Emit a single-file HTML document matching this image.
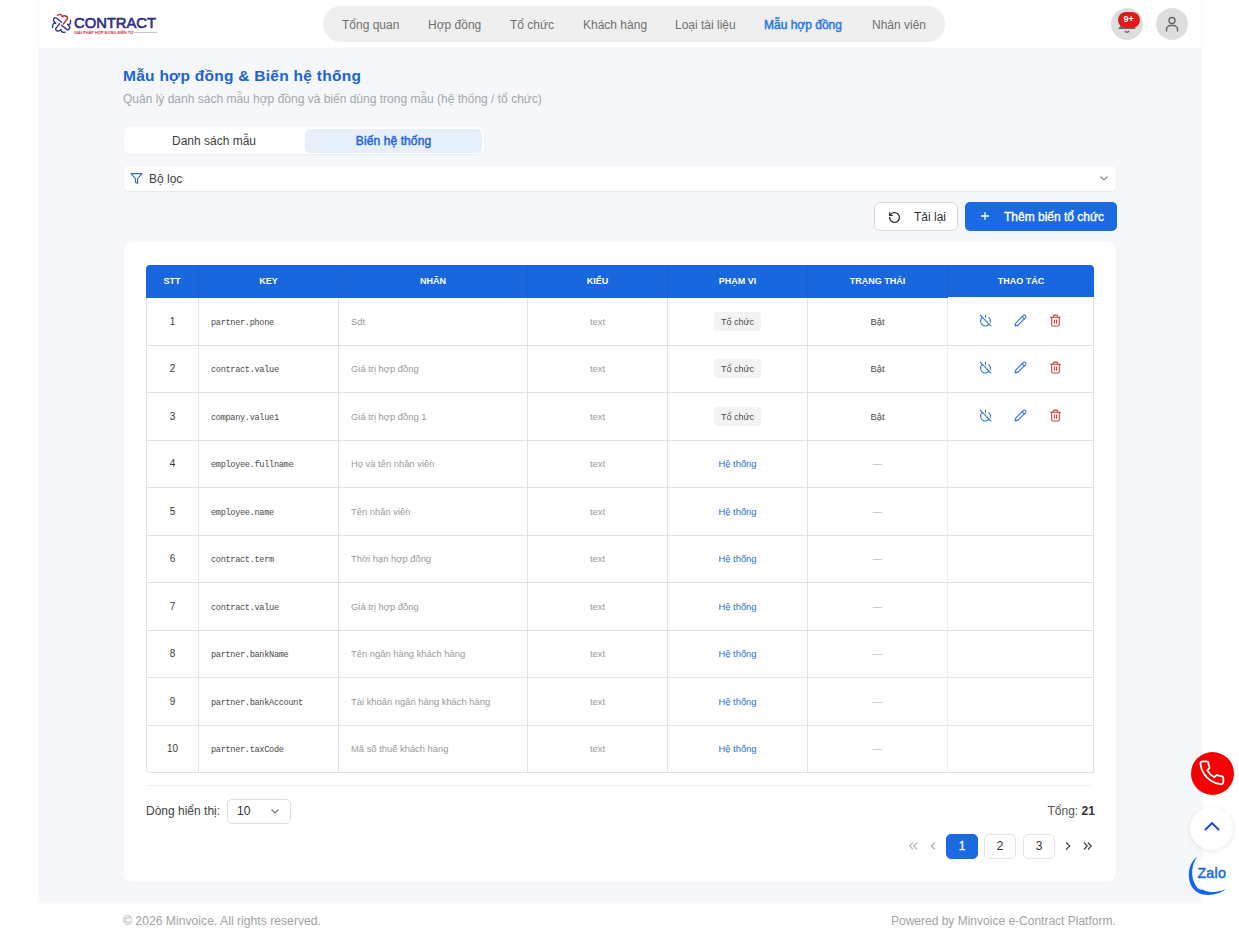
<!DOCTYPE html>
<html><head><meta charset="utf-8">
<style>
*{box-sizing:border-box;margin:0;padding:0}
html,body{width:1239px;height:937px;overflow:hidden;background:#fff;font-family:"Liberation Sans",sans-serif;color:#333}
.abs{position:absolute}
.main{position:absolute;left:39px;top:48px;width:1162px;height:854px;background:#f5f7fb;box-shadow:0 0 2px rgba(0,0,0,.04)}
.shell{position:absolute;left:39px;top:0;width:1162px;height:903px;box-shadow:0 0 3px rgba(0,0,0,.06)}
.nav{position:absolute;left:323px;top:6px;width:622px;height:36px;border-radius:18px;background:#efefef}
.nav span{position:absolute;top:1px;line-height:36px;font-size:12px;color:#6f6f6f;white-space:nowrap}
.nav span.act{color:#2a7be5;-webkit-text-stroke:0.5px #2a7be5}
.circ{position:absolute;top:8px;width:32px;height:32px;border-radius:50%;background:#dedede}
.title{position:absolute;left:123px;top:65.5px;font-size:15.5px;line-height:20px;font-weight:700;color:#1b64d4;white-space:nowrap;letter-spacing:0.27px}
.sub{position:absolute;left:123px;top:91px;font-size:12px;line-height:16px;color:#a3a7ad;white-space:nowrap}
.tabs{position:absolute;left:124px;top:127px;width:360px;height:27px;background:#fff;border-radius:6px;box-shadow:0 1px 2px rgba(0,0,0,.05)}
.tab{position:absolute;top:2px;height:24px;line-height:24px;font-size:12px;text-align:center;white-space:nowrap}
.filter{position:absolute;left:124px;top:166px;width:992px;height:25px;background:#fff;border-radius:4px;box-shadow:0 0 0 .5px rgba(0,0,0,.03),0 1px 2px rgba(0,0,0,.06)}
.btn{position:absolute;top:202px;height:29px;border-radius:6px;font-size:12px;line-height:27px;white-space:nowrap}
.card{position:absolute;left:124px;top:242px;width:992px;height:640px;background:#fff;border-radius:8px;box-shadow:0 1px 2px rgba(0,0,0,.04)}
table{position:absolute;left:146px;top:265px;width:948px;border-collapse:separate;border-spacing:0;table-layout:fixed}
th{background:#1967de;color:#fff;font-size:9px;font-weight:700;height:33px;text-align:center;padding:0 0 2px;border-right:1px solid #1a60d0}
th:first-child{border-top-left-radius:4px}
th:last-child{border-top-right-radius:4px;border-right:none;background:linear-gradient(#1967de 32px,#fff 32px)}
td{height:47.5px;font-size:9.4px;padding:0;border-right:1px solid #e3e3e3;border-bottom:1px solid #e3e3e3;text-align:center;color:#333}
td:first-child{border-left:1px solid #e3e3e3;font-size:10px;color:#3a3a3a}
td.k{text-align:left;padding:3px 0 0 12px;font-family:"Liberation Mono",monospace;font-size:8.6px;letter-spacing:-0.32px;color:#4a4a4a}
td.n{text-align:left;padding-left:12px;color:#999}
td.t{color:#9a9a9a}
td.s{color:#4a4a4a;border-right-color:#ededed}
.badge{display:inline-block;background:#f3f3f3;border-radius:4px;padding:1px 7px 0;line-height:18px;font-size:9px;color:#4a4a4a}
.sys{color:#1e6fe0}
.dash{color:#aaa}
tr:last-child td:first-child{border-bottom-left-radius:4px}

.ic{display:inline-block;vertical-align:middle;margin:0 11px}
.pg{position:absolute;top:834px;width:32px;height:25px;border-radius:5px;border:1px solid #e3e3e3;font-size:12px;line-height:23px;text-align:center;color:#333;background:#fff}
.foot{position:absolute;top:913px;font-size:12.2px;line-height:16px;color:#a3a3a3;white-space:nowrap}
.fab{position:absolute;left:1190px;width:43px;height:43px;border-radius:50%}
</style></head><body>
<div class="shell"></div>

<!-- header -->
<svg class="abs" style="left:48px;top:10px" width="28" height="26" viewBox="48 10 28 26">
  <g fill="none" stroke="#35358c" stroke-width="1.45" stroke-linecap="round" stroke-linejoin="round">
    <path d="M61.5 22 L56.2 18 C54.6 17 53 18.6 53.6 20.6 L55.6 23.4 C53.6 22.3 52.3 24.5 52.6 27.5"/>
    <path d="M59.6 23.6 L55.6 28.9 C55.4 30.8 57.6 31.4 59.6 30.6 L60.9 29.6 C60.9 31.8 62.6 32.6 65 32.3"/>
    <path d="M61.6 25.3 L67 29.6 C68.6 30.4 70.2 28.4 69.6 26.6 L67.6 24.3 C69.6 25.4 71 23.2 70.5 20.3"/>
  </g>
  <path d="M57.5 15.3 C59 14 61.6 13.8 62.4 16.8 C64 15.2 67.8 15.6 67.6 18.6 L63.3 24" fill="none" stroke="#c92a30" stroke-width="1.45" stroke-linecap="round" stroke-linejoin="round"/>
</svg>
<div class="abs" style="left:74px;top:13px;font-size:14px;line-height:20px;color:#2f2d86;-webkit-text-stroke:0.6px #2f2d86;transform:scaleX(1.055);transform-origin:0 0">CONTRACT</div>
<div class="abs" style="left:74px;top:29.5px;font-size:3.9px;line-height:5px;font-weight:700;color:#d2343a;letter-spacing:0;white-space:nowrap">GIẢI PHÁP HỢP ĐỒNG ĐIỆN TỬ</div>
<div class="abs" style="left:134px;top:32px;width:23px;height:1px;background:#c8c8c8"></div>

<div class="nav">
  <span style="left:19px">Tổng quan</span>
  <span style="left:105px">Hợp đồng</span>
  <span style="left:187px">Tổ chức</span>
  <span style="left:260px">Khách hàng</span>
  <span style="left:352px">Loại tài liệu</span>
  <span class="act" style="left:441px">Mẫu hợp đồng</span>
  <span style="left:549px">Nhân viên</span>
</div>

<div class="circ" style="left:1111px"><svg class="abs" style="left:0;top:0" width="32" height="32" viewBox="0 0 32 32" fill="none" stroke="#666" stroke-width="1.5" stroke-linecap="round"><path d="M9 20 C11 18 11.5 15 11.5 12 a4.5 4.5 0 0 1 9 0 C20.5 15 21 18 23 20 Z"/><path d="M8.5 20.2 H23.5"/><path d="M14.3 23.2 a1.8 1.5 0 0 0 3.4 0"/></svg>
<div class="abs" style="left:6.5px;top:3.7px;width:22.5px;height:16px;border-radius:8px;background:#dd1b1b;color:#fff;font-size:9px;font-weight:700;line-height:15px;text-align:center">9+</div></div>
<div class="circ" style="left:1156px"><svg class="abs" style="left:8px;top:8px" width="16" height="16" viewBox="0 0 16 16" fill="none" stroke="#666" stroke-width="1.4" stroke-linecap="round"><circle cx="8" cy="4.5" r="3"/><path d="M2.5 15v-1.5a4 4 0 0 1 4-4h3a4 4 0 0 1 4 4V15"/></svg></div>

<div class="main"></div>

<div class="title">Mẫu hợp đồng &amp; Biến hệ thống</div>
<div class="sub">Quản lý danh sách mẫu hợp đồng và biến dùng trong mẫu (hệ thống / tổ chức)</div>

<div class="tabs">
  <div class="tab" style="left:0;width:180px;color:#3d3d3d">Danh sách mẫu</div>
  <div class="tab" style="left:181px;width:177px;background:#e7effb;border-radius:5px;color:#1f64d2;-webkit-text-stroke:0.45px #1f64d2;letter-spacing:0.1px">Biến hệ thống</div>
</div>

<div class="filter">
  <svg class="abs" style="left:6px;top:6px" width="13" height="13" viewBox="0 0 24 24" fill="none" stroke="#2a64d6" stroke-width="2" stroke-linejoin="round"><path d="M22 3H2l8 9.46V19l4 2v-8.54L22 3z"/></svg>
  <div class="abs" style="left:25px;top:1px;line-height:25px;font-size:12px;color:#3d3d3d">Bộ lọc</div>
  <svg class="abs" style="left:976px;top:10px" width="8" height="5" viewBox="0 0 8 5"><path d="M0.5 0.5 L4 4 L7.5 0.5" fill="none" stroke="#888" stroke-width="1.1"/></svg>
</div>

<div class="btn" style="left:874px;width:84px;background:#fff;border:1px solid #d9d9d9;color:#333"><svg class="abs" style="left:12.5px;top:7.6px" width="13" height="13" viewBox="0 0 24 24" fill="none" stroke="#333" stroke-width="2.4" stroke-linecap="round" stroke-linejoin="round"><path d="M3 12a9 9 0 1 0 9-9 9.75 9.75 0 0 0-6.74 2.74L3 8"/><path d="M3 3v5h5"/></svg><span class="abs" style="left:39px;top:1px">Tải lại</span></div>
<div class="btn" style="left:965px;width:152px;background:#1b69e3;color:#fff;-webkit-text-stroke:0.35px #fff;border-radius:5px"><svg class="abs" style="left:15.5px;top:10px" width="8" height="8" viewBox="0 0 8 8"><path d="M4 0V8M0 4H8" stroke="#fff" stroke-width="1.3"/></svg><span class="abs" style="left:39px;top:1.5px">Thêm biến tổ chức</span></div>

<div class="card"></div>
<table>
<colgroup><col style="width:53px"><col style="width:140px"><col style="width:189px"><col style="width:140px"><col style="width:140px"><col style="width:140px"><col style="width:146px"></colgroup>
<tr><th>STT</th><th>KEY</th><th>NHÃN</th><th>KIỂU</th><th>PHẠM VI</th><th>TRẠNG THÁI</th><th>THAO TÁC</th></tr>
<tr><td>1</td><td class="k">partner.phone</td><td class="n">Sdt</td><td class="t">text</td><td><span class="badge">Tổ chức</span></td><td class="s">Bật</td><td><span class="ic"><svg width="13" height="13" viewBox="0 0 24 24" fill="none" stroke="#2f6fd8" stroke-width="2" stroke-linecap="round" stroke-linejoin="round"><path d="M18.36 6.64A9 9 0 0 1 20.77 15"/><path d="M6.16 6.16a9 9 0 1 0 12.68 12.68"/><path d="M12 2v4"/><path d="M2 2l20 20"/></svg></span><span class="ic"><svg width="13" height="13" viewBox="0 0 24 24" fill="none" stroke="#2f6fd8" stroke-width="2" stroke-linecap="round" stroke-linejoin="round"><path d="M17 3a2.85 2.83 0 1 1 4 4L7.5 20.5 2 22l1.5-5.5Z"/><path d="m15 5 4 4"/></svg></span><span class="ic"><svg width="13" height="13" viewBox="0 0 24 24" fill="none" stroke="#d23b3b" stroke-width="2" stroke-linecap="round" stroke-linejoin="round"><path d="M3 6h18"/><path d="M19 6v14a2 2 0 0 1-2 2H7a2 2 0 0 1-2-2V6"/><path d="M8 6V4a2 2 0 0 1 2-2h4a2 2 0 0 1 2 2v2"/><path d="M10 11v6"/><path d="M14 11v6"/></svg></span></td></tr>
<tr><td>2</td><td class="k">contract.value</td><td class="n">Giá trị hợp đồng</td><td class="t">text</td><td><span class="badge">Tổ chức</span></td><td class="s">Bật</td><td><span class="ic"><svg width="13" height="13" viewBox="0 0 24 24" fill="none" stroke="#2f6fd8" stroke-width="2" stroke-linecap="round" stroke-linejoin="round"><path d="M18.36 6.64A9 9 0 0 1 20.77 15"/><path d="M6.16 6.16a9 9 0 1 0 12.68 12.68"/><path d="M12 2v4"/><path d="M2 2l20 20"/></svg></span><span class="ic"><svg width="13" height="13" viewBox="0 0 24 24" fill="none" stroke="#2f6fd8" stroke-width="2" stroke-linecap="round" stroke-linejoin="round"><path d="M17 3a2.85 2.83 0 1 1 4 4L7.5 20.5 2 22l1.5-5.5Z"/><path d="m15 5 4 4"/></svg></span><span class="ic"><svg width="13" height="13" viewBox="0 0 24 24" fill="none" stroke="#d23b3b" stroke-width="2" stroke-linecap="round" stroke-linejoin="round"><path d="M3 6h18"/><path d="M19 6v14a2 2 0 0 1-2 2H7a2 2 0 0 1-2-2V6"/><path d="M8 6V4a2 2 0 0 1 2-2h4a2 2 0 0 1 2 2v2"/><path d="M10 11v6"/><path d="M14 11v6"/></svg></span></td></tr>
<tr><td>3</td><td class="k">company.value1</td><td class="n">Giá trị hợp đồng 1</td><td class="t">text</td><td><span class="badge">Tổ chức</span></td><td class="s">Bật</td><td><span class="ic"><svg width="13" height="13" viewBox="0 0 24 24" fill="none" stroke="#2f6fd8" stroke-width="2" stroke-linecap="round" stroke-linejoin="round"><path d="M18.36 6.64A9 9 0 0 1 20.77 15"/><path d="M6.16 6.16a9 9 0 1 0 12.68 12.68"/><path d="M12 2v4"/><path d="M2 2l20 20"/></svg></span><span class="ic"><svg width="13" height="13" viewBox="0 0 24 24" fill="none" stroke="#2f6fd8" stroke-width="2" stroke-linecap="round" stroke-linejoin="round"><path d="M17 3a2.85 2.83 0 1 1 4 4L7.5 20.5 2 22l1.5-5.5Z"/><path d="m15 5 4 4"/></svg></span><span class="ic"><svg width="13" height="13" viewBox="0 0 24 24" fill="none" stroke="#d23b3b" stroke-width="2" stroke-linecap="round" stroke-linejoin="round"><path d="M3 6h18"/><path d="M19 6v14a2 2 0 0 1-2 2H7a2 2 0 0 1-2-2V6"/><path d="M8 6V4a2 2 0 0 1 2-2h4a2 2 0 0 1 2 2v2"/><path d="M10 11v6"/><path d="M14 11v6"/></svg></span></td></tr>
<tr><td>4</td><td class="k">employee.fullname</td><td class="n">Họ và tên nhân viên</td><td class="t">text</td><td><span class="sys">Hệ thống</span></td><td class="s"><span class="dash">—</span></td><td></td></tr>
<tr><td>5</td><td class="k">employee.name</td><td class="n">Tên nhân viên</td><td class="t">text</td><td><span class="sys">Hệ thống</span></td><td class="s"><span class="dash">—</span></td><td></td></tr>
<tr><td>6</td><td class="k">contract.term</td><td class="n">Thời hạn hợp đồng</td><td class="t">text</td><td><span class="sys">Hệ thống</span></td><td class="s"><span class="dash">—</span></td><td></td></tr>
<tr><td>7</td><td class="k">contract.value</td><td class="n">Giá trị hợp đồng</td><td class="t">text</td><td><span class="sys">Hệ thống</span></td><td class="s"><span class="dash">—</span></td><td></td></tr>
<tr><td>8</td><td class="k">partner.bankName</td><td class="n">Tên ngân hàng khách hàng</td><td class="t">text</td><td><span class="sys">Hệ thống</span></td><td class="s"><span class="dash">—</span></td><td></td></tr>
<tr><td>9</td><td class="k">partner.bankAccount</td><td class="n">Tài khoản ngân hàng khách hàng</td><td class="t">text</td><td><span class="sys">Hệ thống</span></td><td class="s"><span class="dash">—</span></td><td></td></tr>
<tr><td>10</td><td class="k">partner.taxCode</td><td class="n">Mã số thuế khách hàng</td><td class="t">text</td><td><span class="sys">Hệ thống</span></td><td class="s"><span class="dash">—</span></td><td></td></tr>
</table>


<div class="abs" style="left:147px;top:785px;width:945px;height:1px;background:#f0f0f0"></div>
<div class="abs" style="left:146px;top:803px;font-size:12px;line-height:16px;color:#444;white-space:nowrap">Dòng hiển thị:</div>
<div class="abs" style="left:227px;top:799px;width:64px;height:25px;border:1px solid #dcdcdc;border-radius:5px;background:#fff">
  <span class="abs" style="left:9px;top:3px;font-size:12px;line-height:16px;color:#333">10</span>
  <svg class="abs" style="left:43px;top:9px" width="8" height="5" viewBox="0 0 8 5"><path d="M0.5 0.5 L4 4 L7.5 0.5" fill="none" stroke="#777" stroke-width="1.2"/></svg>
</div>
<div class="abs" style="left:1047.5px;top:803px;font-size:12px;line-height:16px;color:#555;white-space:nowrap">Tổng: <b style="color:#333">21</b></div>
<svg class="abs" style="left:909px;top:842px" width="9" height="8" viewBox="0 0 9 8"><path d="M4 0.5 L0.8 4 L4 7.5 M8 0.5 L4.8 4 L8 7.5" fill="none" stroke="#aaa" stroke-width="1.1"/></svg>
<svg class="abs" style="left:930px;top:842px" width="6" height="8" viewBox="0 0 6 8"><path d="M5 0.5 L1.2 4 L5 7.5" fill="none" stroke="#aaa" stroke-width="1.1"/></svg>
<div class="pg" style="left:946px;background:#1b69e3;border-color:#1b69e3;color:#fff;-webkit-text-stroke:0.3px #fff">1</div>
<div class="pg" style="left:984px">2</div>
<div class="pg" style="left:1023px">3</div>
<svg class="abs" style="left:1065px;top:842px" width="6" height="8" viewBox="0 0 6 8"><path d="M1 0.5 L4.8 4 L1 7.5" fill="none" stroke="#444" stroke-width="1.2"/></svg>
<svg class="abs" style="left:1083px;top:842px" width="9" height="8" viewBox="0 0 9 8"><path d="M1 0.5 L4.2 4 L1 7.5 M5 0.5 L8.2 4 L5 7.5" fill="none" stroke="#444" stroke-width="1.2"/></svg>
<div class="foot" style="left:123px">© 2026 Minvoice. All rights reserved.</div>
<div class="foot" style="left:891px;font-size:12px">Powered by Minvoice e-Contract Platform.</div>

<div class="fab" style="top:751.5px;left:1190.5px;background:#f40000"><svg class="abs" style="left:7.5px;top:7.5px" width="27.6" height="27.6" viewBox="0 0 24 24" fill="none" stroke="#fff" stroke-width="1.6" stroke-linejoin="round"><path d="M22 16.92v3a2 2 0 0 1-2.18 2 19.79 19.79 0 0 1-8.63-3.07 19.5 19.5 0 0 1-6-6 19.79 19.79 0 0 1-3.07-8.67A2 2 0 0 1 4.11 2h3a2 2 0 0 1 2 1.72c.13.96.36 1.9.7 2.81a2 2 0 0 1-.45 2.11L8.09 9.91a16 16 0 0 0 6 6l1.27-1.27a2 2 0 0 1 2.11-.45c.91.34 1.85.57 2.81.7A2 2 0 0 1 22 16.92z"/></svg></div>
<div class="fab" style="top:806.5px;background:#fff;box-shadow:0 1px 5px rgba(0,0,0,.10)"><svg class="abs" style="left:13.5px;top:14.5px" width="16" height="10" viewBox="0 0 16 10"><path d="M1.5 8.5 L8 2 L14.5 8.5" fill="none" stroke="#1d3fe0" stroke-width="1.9" stroke-linecap="round"/></svg></div>
<svg class="abs" style="left:1184px;top:850px" width="50" height="50" viewBox="1184 850 50 50">
  <circle cx="1211" cy="875.5" r="19" fill="#fff"/>
  <path d="M1197.3 856.5 C1190.5 862 1188 870 1189 878 C1190 887 1195.5 893 1203 894.5 C1212 896 1220 893.5 1226 889 C1220 891.5 1214 892.4 1210.7 892 C1206 891.5 1203.2 889.2 1200.8 889.4 C1199.2 889.5 1197.8 888.6 1196.6 886.8 C1193.2 882 1191.6 876 1192.2 870 C1192.8 865 1194.6 860 1197.3 856.5 Z" fill="#0f66f2"/>
  <text x="1197.4" y="878.4" font-family="Liberation Sans" font-size="14.3" letter-spacing="0.25" fill="#1b6ce9" stroke="#1b6ce9" stroke-width="0.55">Zalo</text>
</svg>
</body></html>
